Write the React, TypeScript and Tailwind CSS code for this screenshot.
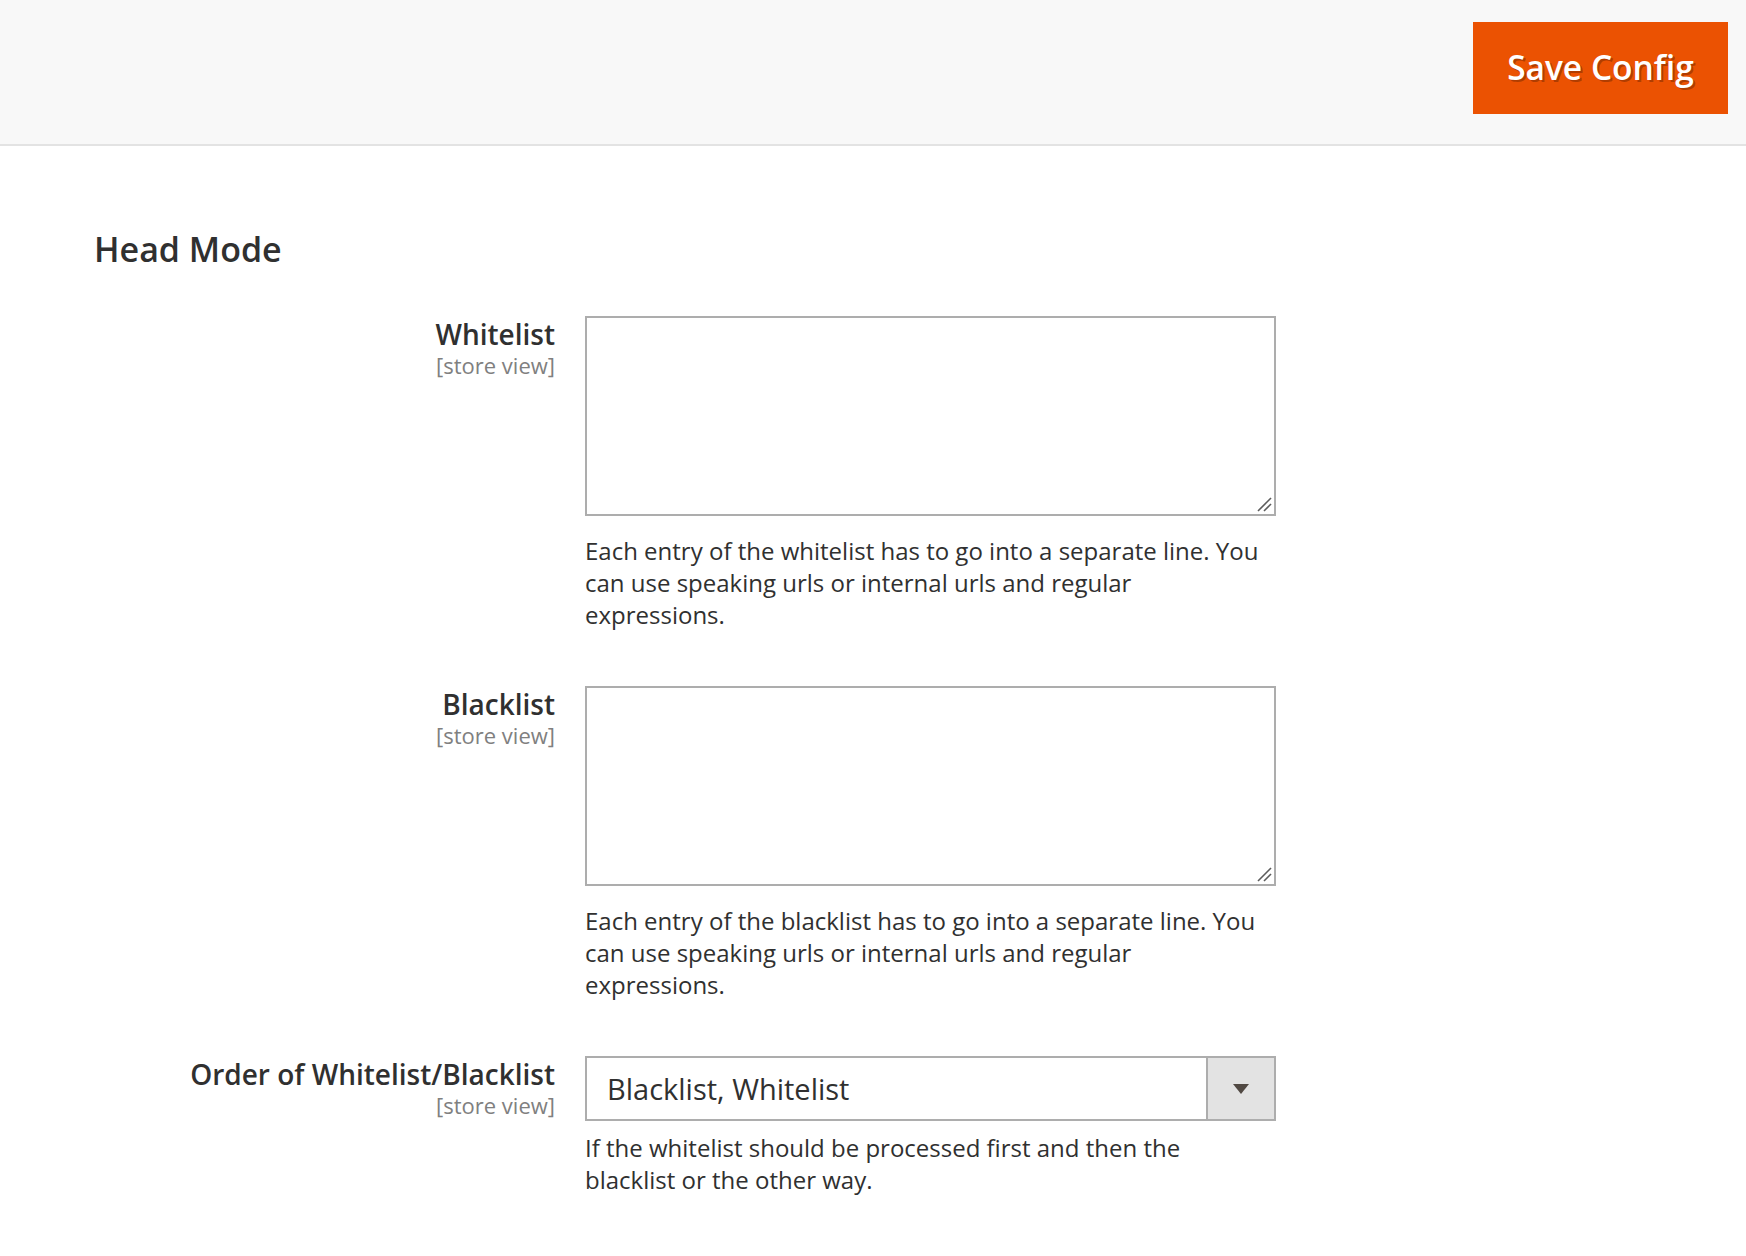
import React from "react";

function Label({ title }: { title: string }) {
  return (
    <div className="w-[461px] shrink-0 text-right">
      <div className="text-[28px] leading-[36px] font-semibold text-[#303030]">{title}</div>
      <div className="text-[22px] leading-[26px] text-[#808080]">[store view]</div>
    </div>
  );
}

function Note({ lines, mt }: { lines: string[]; mt: string }) {
  return (
    <div className={`${mt} text-[24px] leading-[32px] text-[#303030]`}>
      {lines.map((l, i) => (
        <React.Fragment key={i}>
          {l}
          {i < lines.length - 1 && <br />}
        </React.Fragment>
      ))}
    </div>
  );
}

function TextArea() {
  return (
    <div className="relative">
      <textarea className="block w-full h-[200px] border-2 border-[#adadad] bg-white resize-none outline-none" />
      <svg
        className="absolute right-[4px] bottom-[4px] pointer-events-none"
        width="15"
        height="15"
        viewBox="0 0 15 15"
      >
        <line x1="1" y1="14" x2="14" y2="1" stroke="#5c5c5c" strokeWidth="1.6" />
        <line x1="7" y1="14" x2="14" y2="7" stroke="#5c5c5c" strokeWidth="1.6" />
      </svg>
    </div>
  );
}

export default function App() {
  return (
    <div className="min-h-screen bg-white font-['Open_Sans',sans-serif] text-[#303030]">
      <header className="h-[146px] bg-[#f8f8f8] border-b-2 border-[#e3e3e3] flex justify-end items-start pt-[22px] pr-[18px]">
        <button className="h-[92px] w-[255px] pb-[2px] bg-[#eb5202] text-white text-[33.5px] font-semibold [text-shadow:2px_2px_0_rgba(0,0,0,0.25)]">
          Save Config
        </button>
      </header>
      <main className="pl-[94px] pt-[83px] pb-[40px]">
        <h2 className="text-[34px] leading-[41px] font-semibold text-[#303030]">Head Mode</h2>
        <div className="mt-[46px] flex flex-col gap-[55px]">
          <div className="flex gap-[30px]">
            <Label title="Whitelist" />
            <div className="w-[691px]">
              <TextArea />
              <Note
                mt="mt-[19px]"
                lines={[
                  "Each entry of the whitelist has to go into a separate line. You",
                  "can use speaking urls or internal urls and regular",
                  "expressions.",
                ]}
              />
            </div>
          </div>
          <div className="flex gap-[30px]">
            <Label title="Blacklist" />
            <div className="w-[691px]">
              <TextArea />
              <Note
                mt="mt-[19px]"
                lines={[
                  "Each entry of the blacklist has to go into a separate line. You",
                  "can use speaking urls or internal urls and regular",
                  "expressions.",
                ]}
              />
            </div>
          </div>
          <div className="flex gap-[30px]">
            <Label title="Order of Whitelist/Blacklist" />
            <div className="w-[691px]">
              <div className="flex h-[65px] border-2 border-[#adadad] bg-white">
                <div className="flex-1 flex items-center pl-[20px] text-[29px] text-[#303030]">
                  Blacklist, Whitelist
                </div>
                <div className="w-[68px] border-l-2 border-[#adadad] bg-[#e3e3e3] flex items-center justify-center">
                  <svg width="16" height="10" viewBox="0 0 16 10">
                    <polygon points="0,0 16,0 8,10" fill="#514943" />
                  </svg>
                </div>
              </div>
              <Note
                mt="mt-[11px]"
                lines={[
                  "If the whitelist should be processed first and then the",
                  "blacklist or the other way.",
                ]}
              />
            </div>
          </div>
        </div>
      </main>
    </div>
  );
}
